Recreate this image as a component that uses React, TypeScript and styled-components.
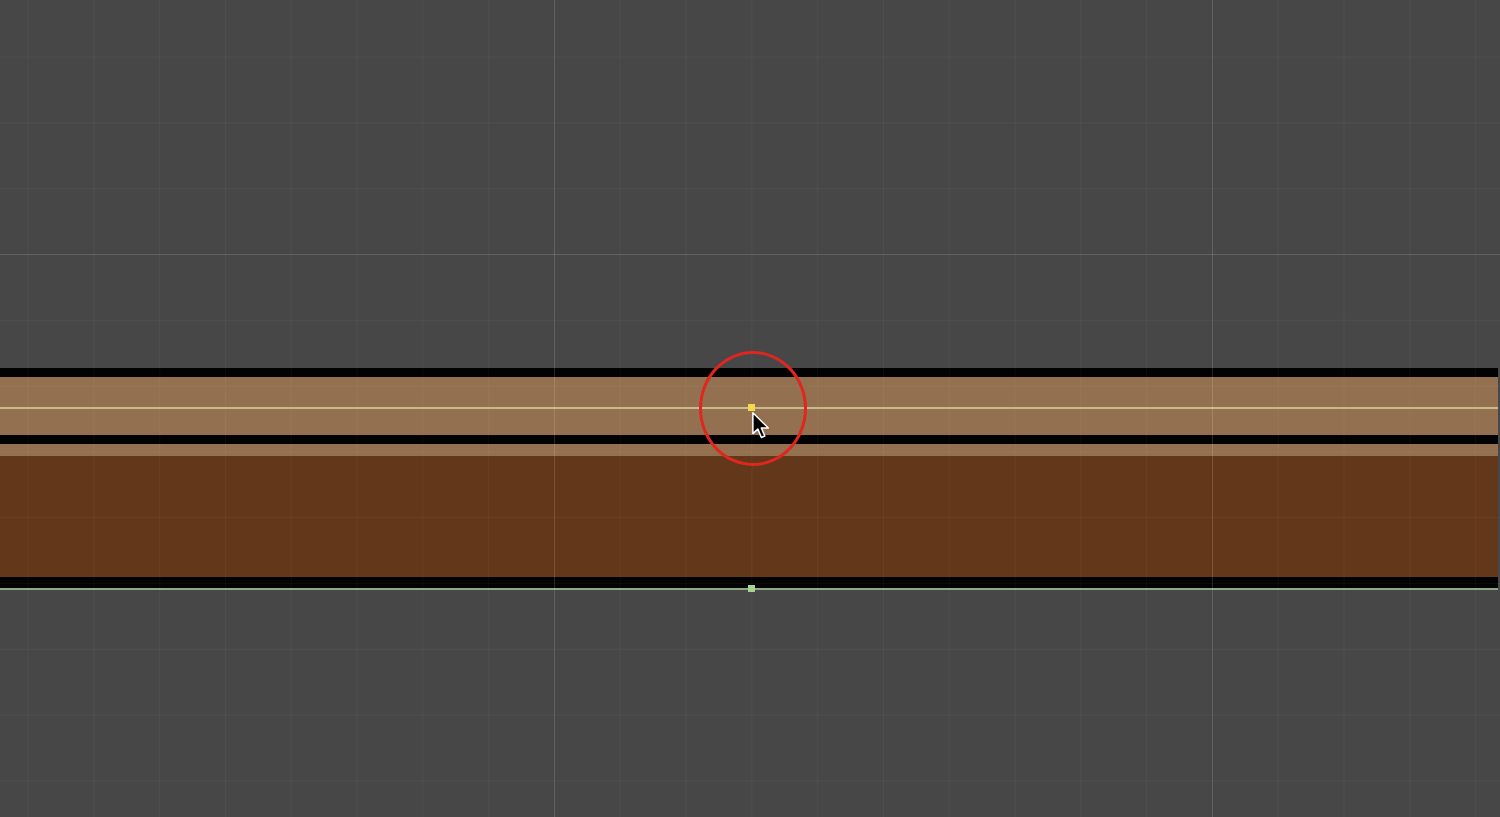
import React from "react";
import styled, { createGlobalStyle } from "styled-components";

const Global = createGlobalStyle`
  html, body { margin: 0; padding: 0; background: #474747; overflow: hidden; }
  #root { width: 1500px; height: 817px; }
`;

const Canvas = styled.div`
  position: relative;
  width: 1500px;
  height: 817px;
  background: #474747;
  overflow: hidden;
  padding-top: 368px;
  box-sizing: border-box;
`;

const Track = styled.div`
  width: 1498px;
  display: flex;
  flex-direction: column;
`;

const Band = styled.div<{ $h: number; $c: string }>`
  position: relative;
  height: ${(p) => p.$h}px;
  background: ${(p) => p.$c};
`;

const Guide = styled.div<{ $top: number; $c: string; $h: number }>`
  position: absolute;
  left: 0;
  right: 0;
  top: ${(p) => p.$top}px;
  height: ${(p) => p.$h}px;
  background: ${(p) => p.$c};
`;

const Handle = styled.div<{ $c: string; $top: number; $w: number; $h: number }>`
  position: absolute;
  z-index: 1;
  left: 748px;
  top: ${(p) => p.$top}px;
  width: ${(p) => p.$w}px;
  height: ${(p) => p.$h}px;
  background: ${(p) => p.$c};
`;

const Grid = styled.div`
  position: absolute;
  inset: 0;
  z-index: 2;
  pointer-events: none;
  background-image:
    linear-gradient(to right, rgba(255, 255, 255, 0.11) 0 1px, transparent 1px),
    linear-gradient(to bottom, rgba(255, 255, 255, 0.11) 0 1px, transparent 1px),
    linear-gradient(to right, rgba(255, 255, 255, 0.035) 0 1px, transparent 1px),
    linear-gradient(to bottom, rgba(255, 255, 255, 0.035) 0 1px, transparent 1px);
  background-size: 658px 100%, 100% 658px, 65.8px 100%, 100% 65.8px;
  background-position: 554px 0, 0 254px, 27.6px 0, 0 56.6px;
`;

const Highlight = styled.div`
  position: absolute;
  z-index: 3;
  left: 699px;
  top: 351px;
  width: 108px;
  height: 115px;
  border: 3.5px solid #e0261e;
  border-radius: 50%;
  box-sizing: border-box;
  pointer-events: none;
`;

const Pointer = styled.svg`
  position: absolute;
  z-index: 4;
  left: 751px;
  top: 411px;
  width: 20px;
  height: 29px;
  pointer-events: none;
`;

export default function App() {
  return (
    <>
      <Global />
      <Canvas>
        <Track>
          <Band $h={9} $c="#020202" />
          <Band $h={58} $c="#93704f">
            <Guide $top={30} $h={2} $c="#c9ba8c" />
            <Handle $c="#f2da4c" $top={27} $w={7} $h={7} />
          </Band>
          <Band $h={9} $c="#020202" />
          <Band $h={12} $c="#93704f" />
          <Band $h={121} $c="#63371a" />
          <Band $h={11} $c="#020202">
            <Handle $c="#a6d48f" $top={8} $w={7} $h={7} />
          </Band>
          <Band $h={2} $c="#8fa888" />
        </Track>
        <Grid />
        <Highlight />
        <Pointer viewBox="0 0 17 25">
          <path
            d="M1.5 1.5 L1.5 19.5 L5.8 15.6 L8.8 22.8 L11.8 21.5 L8.8 14.6 L14.8 14.6 Z"
            fill="#000"
            stroke="#fff"
            strokeWidth="1.3"
            strokeLinejoin="round"
          />
        </Pointer>
      </Canvas>
    </>
  );
}
